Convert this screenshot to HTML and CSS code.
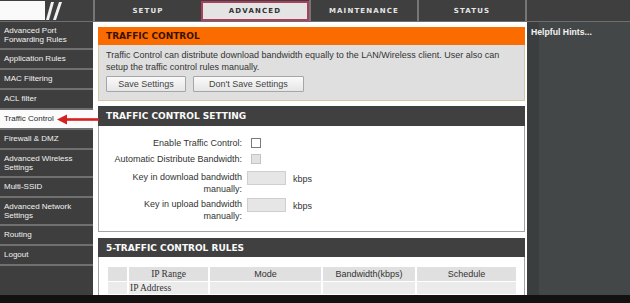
FILE: index.html
```html
<!DOCTYPE html>
<html>
<head>
<meta charset="utf-8">
<title>Traffic Control</title>
<link rel="stylesheet" href="styles.css">
</head>
<body>
<div class="page">
  <header class="topbar">
    <div class="logo">
      <svg class="logo-svg" width="93" height="21" viewBox="0 0 93 21">
        <rect x="0" y="1" width="45" height="19" fill="#fafafa"/>
        <polygon points="51,2 54,2 49,20 46,20" fill="#f2f2f2"/>
        <polygon points="59,2 62,2 56,20 53,20" fill="#f2f2f2"/>
      </svg>
    </div>
    <nav class="tabs">
      <div class="tab">SETUP</div>
      <div class="tab tab-active">ADVANCED</div>
      <div class="tab">MAINTENANCE</div>
      <div class="tab">STATUS</div>
      <div class="tab tab-fill"></div>
    </nav>
  </header>

  <div class="middle">
    <aside class="sidebar">
      <div class="nav-item two">Advanced Port<br>Forwarding Rules</div>
      <div class="nav-item">Application Rules</div>
      <div class="nav-item">MAC Filtering</div>
      <div class="nav-item">ACL filter</div>
      <div class="nav-item active">Traffic Control
        <svg class="arrow" width="42" height="11" viewBox="0 0 42 11">
          <polygon points="0,5.5 10,0.5 10,10.5" fill="#d61f1f"/>
          <rect x="8" y="4.2" width="34" height="2.6" fill="#d61f1f"/>
        </svg>
      </div>
      <div class="nav-item">Firewall &amp; DMZ</div>
      <div class="nav-item two">Advanced Wireless<br>Settings</div>
      <div class="nav-item">Multi-SSID</div>
      <div class="nav-item two">Advanced Network<br>Settings</div>
      <div class="nav-item">Routing</div>
      <div class="nav-item">Logout</div>
    </aside>

    <main class="main">
      <section class="box box-intro">
        <div class="box-head head-orange">TRAFFIC CONTROL</div>
        <div class="box-body body-intro">
          <p class="intro-text">Traffic Control can distribute download bandwidth equally to the LAN/Wireless client. User also can setup the traffic control rules manually.</p>
          <div class="buttons">
            <button class="btn btn-save">Save Settings</button>
            <button class="btn btn-nosave">Don't Save Settings</button>
          </div>
        </div>
      </section>

      <section class="box box-setting">
        <div class="box-head head-dark">TRAFFIC CONTROL SETTING</div>
        <div class="box-body body-setting">
          <div class="row row-1">
            <div class="label">Enable Traffic Control:</div>
            <div class="control"><span class="check"></span></div>
          </div>
          <div class="row row-2">
            <div class="label">Automatic Distribute Bandwidth:</div>
            <div class="control"><span class="check check-disabled"></span></div>
          </div>
          <div class="row row-3">
            <div class="label label-two">Key in download bandwidth<br>manually:</div>
            <div class="control control-input"><span class="field"></span><span class="unit">kbps</span></div>
          </div>
          <div class="row row-4">
            <div class="label label-two">Key in upload bandwidth<br>manually:</div>
            <div class="control control-input"><span class="field"></span><span class="unit">kbps</span></div>
          </div>
        </div>
      </section>

      <section class="box box-rules">
        <div class="box-head head-dark">5-TRAFFIC CONTROL RULES</div>
        <div class="box-body body-rules">
          <table class="rules">
            <tr class="rules-head">
              <td class="c0"></td>
              <td class="c1 serif">IP Range</td>
              <td class="c2">Mode</td>
              <td class="c3">Bandwidth(kbps)</td>
              <td class="c4">Schedule</td>
            </tr>
            <tr class="rules-row">
              <td class="c0"></td>
              <td class="c1 serif left">IP Address</td>
              <td class="c2"></td>
              <td class="c3"></td>
              <td class="c4"></td>
            </tr>
          </table>
        </div>
      </section>
    </main>

    <aside class="hints">
      <div class="hints-title">Helpful Hints...</div>
    </aside>
  </div>

  <div class="bottombar"></div>
</div>
</body>
</html>
```

FILE: styles.css
```css
* { box-sizing: border-box; }

html, body {
  margin: 0;
  padding: 0;
}

body {
  width: 630px;
  height: 303px;
  overflow: hidden;
  background: #121212;
  font-family: "Liberation Sans", Arial, sans-serif;
  color: #333;
}

.page {
  display: grid;
  grid-template-rows: 22px 273px 8px;
  width: 630px;
  height: 303px;
}

/* ---------- top bar ---------- */
.topbar {
  display: flex;
  background: #3f3f3f;
  border-bottom: 1px solid #6e6e6e;
}

.logo {
  width: 93px;
  flex: none;
  display: flex;
}

.logo-svg { display: block; }

.tabs {
  display: flex;
  flex: 1;
}

.tab {
  width: 108px;
  flex: none;
  border-left: 2px solid #767676;
  display: flex;
  align-items: center;
  justify-content: center;
  color: #e6e6e6;
  font-family: "DejaVu Sans", Verdana, sans-serif;
  font-weight: bold;
  font-size: 7px;
  letter-spacing: 1.15px;
}

.tab-active {
  background: #e4e4e4;
  color: #333;
  border: 2px solid #a8405e;
  margin-top: 1px;
}

.tab-fill {
  flex: 1;
  width: auto;
}

/* ---------- middle ---------- */
.middle {
  display: grid;
  grid-template-columns: 93px 434px 103px;
  min-height: 0;
}

/* sidebar */
.sidebar {
  background: #3e3e3e;
  display: flex;
  flex-direction: column;
  position: relative;
}

.nav-item {
  height: 20px;
  flex: none;
  display: flex;
  align-items: center;
  padding: 0 4px;
  color: #f2f2f2;
  font-size: 8px;
  line-height: 9.5px;
  border-bottom: 2px solid #707070;
  position: relative;
}

.nav-item.two { height: 28px; }

.nav-item.active {
  background: #fbfbfb;
  color: #2a2a2a;
}

.arrow {
  position: absolute;
  left: 57px;
  top: 4px;
  z-index: 3;
}

/* main */
.main {
  background: #fff;
  padding: 5px 2px 0 5px;
  display: flex;
  flex-direction: column;
  overflow: hidden;
}

.box-setting { margin-top: 5px; }
.box-rules { margin-top: 6px; }

.box-head {
  font-family: "DejaVu Sans", Verdana, sans-serif;
  font-weight: bold;
  font-size: 9px;
  padding-left: 8px;
  display: flex;
  align-items: center;
}

.head-orange {
  height: 18px;
  background: #fa6c00;
  color: #3a1200;
}

.head-dark {
  height: 20px;
  background: #404040;
  color: #fafafa;
}

.box-rules .head-dark { height: 19px; }

.box-body {
  border: 1px solid #a4a4a4;
  border-top: none;
}

.body-intro {
  background: #dfdfdf;
  border-color: #d8c6a0;
  height: 56px;
  padding: 5px 7px 0 7px;
}

.intro-text {
  margin: 0;
  font-size: 9px;
  line-height: 11.5px;
  color: #333;
}

.buttons {
  display: flex;
  gap: 7px;
  margin-top: 3px;
}

.btn {
  height: 16px;
  padding: 0;
  font-family: "Liberation Sans", Arial, sans-serif;
  font-size: 9px;
  color: #444;
  background: linear-gradient(#fafafa, #e6e6e6);
  border: 1px solid #a6a6a6;
  border-radius: 1px;
}

.btn-save { width: 80px; }
.btn-nosave { width: 111px; }

/* setting form */
.body-setting {
  height: 106px;
  padding-top: 9px;
  background: #fff;
}

.row {
  display: flex;
  align-items: flex-start;
}

.label {
  width: 143px;
  flex: none;
  text-align: right;
  font-size: 9px;
  line-height: 16px;
  color: #333;
}

.label-two {
  line-height: 11.5px;
  padding-top: 1px;
}

.control {
  display: flex;
  align-items: flex-start;
  margin-left: 5px;
}

.row-1, .row-2 { height: 16px; }
.row-3 { margin-top: 4px; }
.row-4 { margin-top: 3px; }

.check {
  width: 10px;
  height: 10px;
  margin: 3px 0 0 4px;
  border: 1px solid #7a7a7a;
  background: #fff;
}

.check-disabled {
  background: #e2e2e2;
  border-color: #c4c4c4;
}

.field {
  width: 39px;
  height: 14px;
  background: #e6e6e6;
  border: 1px solid #cfcfcf;
}

.unit {
  margin-left: 7px;
  font-size: 9px;
  line-height: 16px;
  color: #333;
}

/* rules table */
.body-rules {
  background: #fff;
  padding: 9px 0 0 7px;
  height: 60px;
}

.rules {
  border-collapse: separate;
  border-spacing: 2px 1px;
  table-layout: fixed;
}

.rules td {
  padding: 0;
  font-family: "Liberation Sans", Arial, sans-serif;
  font-size: 9px;
  color: #333;
  text-align: center;
}

.rules td.serif {
  font-family: "Liberation Serif", "Times New Roman", serif;
  font-size: 9.5px;
}

.rules td.left { text-align: left; padding-left: 1px; }

.rules-head td {
  height: 14px;
  background: #e0e0e0;
}

.rules-row td {
  height: 12px;
  background: #ebebeb;
}

.c0 { width: 19px; }
.c1 { width: 79px; }
.c2 { width: 111px; }
.c3 { width: 92px; }
.c4 { width: 99px; }

/* hints */
.hints {
  background: linear-gradient(90deg, #3a3e3e 0, #3a3e3e 12px, #434747 12px);
  padding: 5px 4px 0 4px;
}

.hints-title {
  font-weight: bold;
  font-size: 8.7px;
  line-height: 11px;
  color: #f2f2f2;
}

.bottombar {
  background: #121212;
}
```
